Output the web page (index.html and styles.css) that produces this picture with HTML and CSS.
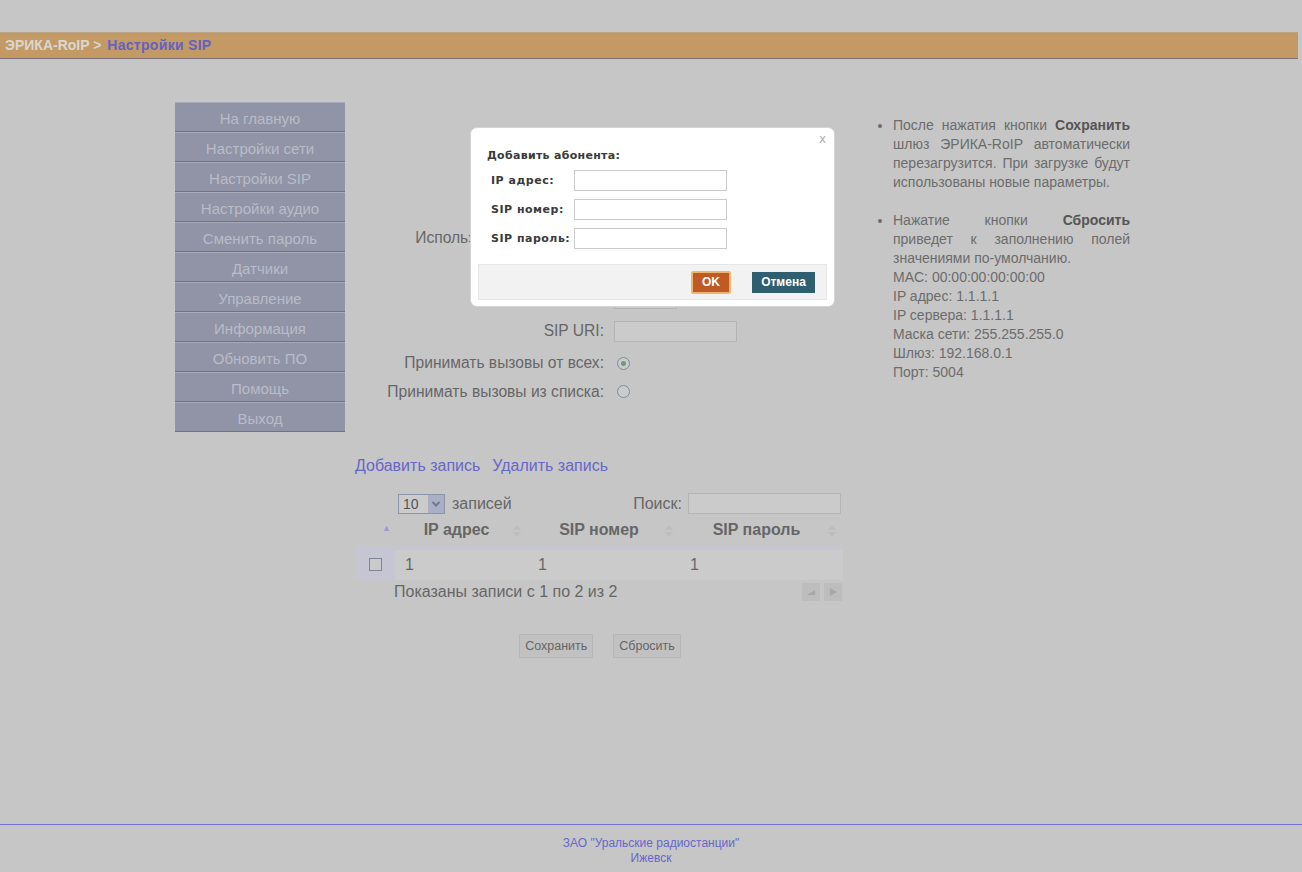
FILE: index.html
```html
<!DOCTYPE html>
<html lang="ru">
<head>
<meta charset="utf-8">
<title>Настройки SIP</title>
<link rel="stylesheet" href="styles.css">
</head>
<body>
<div class="page">
  <header class="topbar">
    <span class="crumb-root">ЭРИКА-RoIP &gt;</span>
    <span class="crumb-cur">Настройки SIP</span>
  </header>

  <div class="main">
    <nav class="menu">
      <a class="menu-item">На главную</a>
      <a class="menu-item">Настройки сети</a>
      <a class="menu-item">Настройки SIP</a>
      <a class="menu-item">Настройки аудио</a>
      <a class="menu-item">Сменить пароль</a>
      <a class="menu-item">Датчики</a>
      <a class="menu-item">Управление</a>
      <a class="menu-item">Информация</a>
      <a class="menu-item">Обновить ПО</a>
      <a class="menu-item">Помощь</a>
      <a class="menu-item">Выход</a>
    </nav>

    <section class="content">
      <div class="form">
        <div class="frow h30"><span class="flabel">SIP сервер:</span><span class="finput"></span></div>
        <div class="frow h30"><span class="flabel">SIP порт:</span><span class="finput short"></span></div>
        <div class="frow h30"><span class="flabel">SIP номер:</span><span class="finput"></span></div>
        <div class="frow h30"><span class="flabel">Использовать SIP сервер:</span><span class="fcheck"></span></div>
        <div class="frow h30"><span class="flabel">Пароль:</span><span class="finput"></span></div>
        <div class="frow h30"><span class="flabel">Время регистр.:</span><span class="finput short"></span></div>
        <div class="frow h36"><span class="flabel">SIP URI:</span><span class="finput"></span></div>
        <div class="frow h28"><span class="flabel">Принимать вызовы от всех:</span><span class="radio checked"></span></div>
        <div class="frow h29"><span class="flabel">Принимать вызовы из списка:</span><span class="radio"></span></div>
      </div>

      <div class="links">
        <a class="link">Добавить запись</a>
        <a class="link">Удалить запись</a>
      </div>

      <div class="tcontrols">
        <div class="tlen">
          <span class="select"><span class="select-val">10</span><span class="select-btn"><svg width="10" height="8" viewBox="0 0 10 8"><path d="M1.5 2 L5 5.5 L8.5 2" fill="none" stroke="#6f7894" stroke-width="2"/></svg></span></span>
          <span class="tlen-text">записей</span>
        </div>
        <div class="tsearch">
          <span class="tsearch-label">Поиск:</span>
          <span class="tsearch-input"></span>
        </div>
      </div>

      <table class="grid">
        <colgroup>
          <col class="c1"><col class="c2"><col class="c3"><col class="c4">
        </colgroup>
        <thead>
          <tr>
            <th class="th-first"><span class="sort-up">▲</span></th>
            <th>IP адрес<span class="sort-both"></span></th>
            <th>SIP номер<span class="sort-both"></span></th>
            <th>SIP пароль<span class="sort-both"></span></th>
          </tr>
        </thead>
        <tbody>
          <tr>
            <td class="td-first"><span class="cbox"></span></td>
            <td>1</td>
            <td>1</td>
            <td>1</td>
          </tr>
        </tbody>
      </table>

      <div class="tfoot">
        <span class="tinfo">Показаны записи с 1 по 2 из 2</span>
        <span class="pager">
          <span class="pbtn"><svg width="10" height="10" viewBox="0 0 10 10"><path d="M9 3 L1 8 L9 8 Z" fill="#a8a8a8"/></svg></span>
          <span class="pbtn"><svg width="10" height="10" viewBox="0 0 10 10"><path d="M2 1 L9 5 L2 9 Z" fill="#a8a8a8"/></svg></span>
        </span>
      </div>

      <div class="actions">
        <span class="btn">Сохранить</span>
        <span class="btn">Сбросить</span>
      </div>
    </section>

    <aside class="info">
      <ul>
        <li class="just">После нажатия кнопки <b>Сохранить</b> шлюз ЭРИКА-RoIP автоматически перезагрузится. При загрузке будут использованы новые параметры.</li>
        <li><span class="just-block">Нажатие кнопки <b>Сбросить</b> приведет к заполнению полей значениями по-умолчанию.</span>
          MAC: 00:00:00:00:00:00<br>
          IP адрес: 1.1.1.1<br>
          IP сервера: 1.1.1.1<br>
          Маска сети: 255.255.255.0<br>
          Шлюз: 192.168.0.1<br>
          Порт: 5004
        </li>
      </ul>
    </aside>
  </div>

  <footer class="footer">
    <div>ЗАО "Уральские радиостанции"</div>
    <div>Ижевск</div>
  </footer>

  <div class="modal">
    <span class="modal-close">x</span>
    <div class="modal-body">
      <div class="modal-title">Добавить абонента:</div>
      <div class="mrow"><span class="mlabel">IP адрес:</span><span class="minput"></span></div>
      <div class="mrow"><span class="mlabel">SIP номер:</span><span class="minput"></span></div>
      <div class="mrow"><span class="mlabel">SIP пароль:</span><span class="minput"></span></div>
    </div>
    <div class="modal-foot">
      <span class="mbtn ok">OK</span>
      <span class="mbtn cancel">Отмена</span>
    </div>
  </div>
</div>
</body>
</html>
```

FILE: styles.css
```css
* { box-sizing: border-box; }
html, body { margin: 0; padding: 0; }
body {
  background: #c6c6c6;
  font-family: "Liberation Sans", Arial, sans-serif;
  color: #646464;
}
.page {
  position: relative;
  height: 872px;
  display: flex;
  flex-direction: column;
  padding-top: 32px;
}

/* header */
.topbar {
  height: 27px;
  background: #c49a64;
  border-top: 1px solid #bba486;
  border-bottom: 1px solid #7d7278;
  font-size: 14px;
  font-weight: bold;
  line-height: 25px;
  padding-left: 5px;
  margin-right: 4px;
}
.crumb-root { color: #d9d6d2; }
.crumb-cur { color: #6262c6; margin-left: 2px; letter-spacing: 0.3px; }

/* main */
.main {
  display: flex;
  align-items: flex-start;
  padding-left: 175px;
  margin-top: 43px;
}

.menu {
  width: 170px;
  display: flex;
  flex-direction: column;
}
.menu-item {
  display: block;
  height: 30px;
  background: #9094a6;
  border-top: 1px solid #a7aaba;
  border-bottom: 1px solid #6f7286;
  color: #b9bcc9;
  font-size: 15px;
  line-height: 28px;
  padding-top: 2px;
  text-align: center;
}

/* content */
.content {
  width: 488px;
  margin-left: 10px;
  padding-top: 31px;
}
.form { display: flex; flex-direction: column; }
.frow {
  display: grid;
  grid-template-columns: 249px auto;
  column-gap: 10px;
  align-items: center;
  font-size: 15.6px;
}
.h30 { height: 30px; }
.h36 { height: 36px; }
.h28 { height: 28px; }
.h29 { height: 29px; }
.flabel { text-align: right; color: #666; white-space: nowrap; }
.finput {
  display: block;
  width: 123px;
  height: 21px;
  border: 1px solid #b4b4b4;
  background: #cbcbcb;
}
.finput.short { width: 63px; }
.fcheck {
  display: block;
  width: 13px; height: 13px;
  border: 1px solid #7a8590;
  background: #cdcdcd;
}
.radio {
  display: block;
  width: 13px; height: 13px;
  margin-left: 3px;
  border-radius: 50%;
  border: 1px solid #7d8c9c;
  background: #cbcbcb;
  position: relative;
}
.radio.checked::after {
  content: "";
  position: absolute;
  left: 3px; top: 3px;
  width: 5px; height: 5px;
  border-radius: 50%;
  background: #6a9e74;
}

.links {
  margin-top: 50px;
  font-size: 16px;
  line-height: 20px;
  display: flex;
  gap: 12px;
}
.link { color: #6767c9; }

.tcontrols {
  margin-top: 17px;
  height: 21px;
  display: flex;
  justify-content: space-between;
  align-items: center;
  font-size: 16px;
}
.tlen { display: flex; align-items: center; padding-left: 43px; gap: 7px; }
.select {
  display: flex;
  width: 47px; height: 20px;
  border: 1px solid #8a96a8;
  background: #cbcbcb;
  align-items: stretch;
}
.select-val { flex: 1; font-size: 14px; line-height: 18px; padding-left: 4px; color: #555; }
.select-btn {
  width: 16px;
  background: #a9b0c6;
  display: flex; align-items: center; justify-content: center;
}
.tlen-text { color: #666; }
.tsearch { display: flex; align-items: center; gap: 6px; padding-right: 2px; }
.tsearch-label { color: #666; }
.tsearch-input {
  display: block;
  width: 153px; height: 21px;
  border: 1px solid #b5b5b5;
  background: #cbcbcb;
}

.grid {
  width: 488px;
  table-layout: fixed;
  border-collapse: collapse;
  font-size: 16px;
}
.c1 { width: 40px; } .c2 { width: 133px; } .c3 { width: 152px; } .c4 { width: 163px; }
.grid th {
  height: 33px;
  font-weight: bold;
  color: #666;
  text-align: center;
  position: relative;
  padding: 2px 10px 0 0;
  border-bottom: 1px solid #5c5c5c;
}
.sort-up {
  position: absolute;
  right: 4px; top: 9px;
  font-size: 9px;
  color: #9a9ad6;
}
.sort-both {
  position: absolute;
  right: 7px; top: 11px;
  width: 8px; height: 12px;
}
.sort-both::before, .sort-both::after {
  content: "";
  position: absolute;
  left: 0;
  border-left: 4px solid transparent;
  border-right: 4px solid transparent;
}
.sort-both::before { top: 0; border-bottom: 5px solid #bdbdbd; }
.sort-both::after { bottom: 0; border-top: 5px solid #bdbdbd; }
.grid td {
  height: 33px;
  background: #cbcbcb;
  border-top: 5px solid #c6c6d2;
  padding: 0 0 0 10px;
  color: #666;
  vertical-align: middle;
}
.grid td.td-first { background: #c6c6d2; padding-left: 14px; }
.cbox {
  display: block;
  width: 13px; height: 13px;
  border: 1px solid #7d8894;
  background: #cacaca;
}

.tfoot {
  display: flex;
  justify-content: space-between;
  align-items: center;
  height: 24px;
  padding-left: 39px;
  font-size: 16px;
}
.tinfo { color: #666; }
.pager { display: flex; gap: 4px; padding-right: 1px; }
.pbtn {
  width: 18px; height: 18px;
  background: #bdbdbd;
  display: flex; align-items: center; justify-content: center;
}

.actions {
  margin-top: 30px;
  display: flex;
  justify-content: center;
  gap: 20px;
  padding-left: 2px;
}
.btn {
  display: block;
  height: 24px;
  padding: 0 5px;
  border: 1px solid #b6b6b6;
  background: #c1c1c1;
  color: #666;
  font-size: 12.5px;
  line-height: 22px;
}

/* info */
.info {
  width: 260px;
  margin-left: 27px;
  margin-top: 14px;
  font-size: 14px;
  line-height: 19px;
  color: #6c6c6c;
}
.info ul { margin: 0; padding-left: 23px; }
.info li { margin-bottom: 19px; }
.info b { color: #555; }
.just { text-align: justify; }
.just-block { display: block; text-align: justify; }

/* footer */
.footer {
  margin-top: auto;
  height: 48px;
  border-top: 1px solid #7272cc;
  padding-top: 11px;
  text-align: center;
  color: #6767c9;
  font-size: 12px;
  line-height: 15px;
}

/* modal */
.modal {
  position: absolute;
  left: 470px; top: 127px;
  width: 365px; height: 180px;
  background: #fff;
  border: 1px solid #d4d4d4;
  border-radius: 7px;
  padding: 6px 7px 6px;
  font-family: "DejaVu Sans", Verdana, sans-serif;
  color: #333;
}
.modal-close {
  position: absolute;
  right: 8px; top: 4px;
  font-size: 12px;
  color: #b0b0b0;
  font-family: "DejaVu Sans", Verdana, sans-serif;
}
.modal-body { padding: 15px 0 0 9px; height: 130px; }
.modal-title {
  font-size: 11px;
  font-weight: bold;
  color: #3a3a3a;
  height: 17px;
  letter-spacing: 0.3px;
}
.mrow {
  display: flex;
  align-items: center;
  height: 29px;
  padding-left: 4px;
}
.mlabel {
  width: 83px;
  font-size: 11px;
  font-weight: bold;
  color: #3a3a3a;
  letter-spacing: 0.5px;
}
.minput {
  display: block;
  width: 153px; height: 21px;
  border: 1px solid #cbcbcb;
  background: #fff;
}
.modal-foot {
  height: 36px;
  background: #f2f2f2;
  border: 1px solid #e6e6e6;
  display: flex;
  justify-content: flex-end;
  align-items: center;
  gap: 21px;
  padding-right: 11px;
}
.mbtn {
  display: block;
  color: #fff;
  font-weight: bold;
  font-size: 12px;
  font-family: "Liberation Sans", Arial, sans-serif;
  text-align: center;
}
.mbtn.ok {
  width: 40px; height: 23px;
  line-height: 19px;
  background: #bf5a26;
  border: 2px solid #edb66c;
  border-radius: 2px;
}
.mbtn.cancel {
  width: 63px; height: 21px;
  line-height: 21px;
  background: #2f5e70;
}
```
